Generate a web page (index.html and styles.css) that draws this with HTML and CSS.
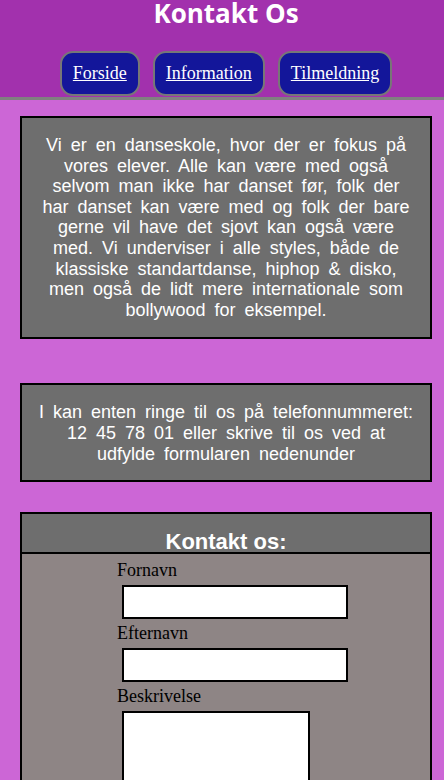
FILE: index.html
```html
<!DOCTYPE html>
<html lang="da">
<head>
<meta charset="utf-8">
<title>Kontakt Os</title>
<link rel="stylesheet" href="styles.css">
</head>
<body>
<header class="site-header">
  <h1 class="site-title">Kontakt Os</h1>
  <nav class="nav">
    <a class="nav-btn" href="#">Forside</a>
    <a class="nav-btn" href="#">Information</a>
    <a class="nav-btn" href="#">Tilmeldning</a>
  </nav>
</header>
<main class="main">
  <section class="box box-intro">
    <p>Vi er en danseskole, hvor der er fokus på vores elever. Alle kan være med også selvom man ikke har danset før, folk der har danset kan være med og folk der bare gerne vil have det sjovt kan også være med. Vi underviser i alle styles, både de klassiske standartdanse, hiphop &amp; disko, men også de lidt mere internationale som bollywood for eksempel.</p>
  </section>
  <section class="box box-phone">
    <p>I kan enten ringe til os på telefonnummeret: 12 45 78 01 eller skrive til os ved at udfylde formularen nedenunder</p>
  </section>
  <section class="form-box">
    <div class="form-head"><h2>Kontakt os:</h2></div>
    <form class="form">
      <label class="lbl" for="fn">Fornavn</label>
      <input class="inp" id="fn" type="text">
      <label class="lbl" for="en">Efternavn</label>
      <input class="inp" id="en" type="text">
      <label class="lbl" for="bs">Beskrivelse</label>
      <textarea class="txt" id="bs"></textarea>
    </form>
  </section>
</main>
</body>
</html>
```
FILE: styles.css
```css
html, body { margin: 0; padding: 0; }
body {
  background: #cc66d6;
  font-family: "Liberation Serif", serif;
}
.site-header {
  background: #a231ad;
  border-bottom: 3px solid #808080;
  padding: 0 0 1px 8px;
  text-align: center;
}
.site-title {
  margin: 0;
  padding-top: 1px;
  font-family: "Open Sans", sans-serif;
  font-weight: 700;
  font-size: 26px;
  line-height: 24px;
  color: #fff;
}
.nav {
  display: flex;
  justify-content: center;
  gap: 13px;
  margin-top: 26px;
}
.nav-btn {
  display: flex;
  align-items: center;
  height: 41px;
  padding: 0 11px;
  background: #13169a;
  border: 2px solid #777777;
  border-radius: 13px;
  color: #fff;
  font-family: "Liberation Serif", serif;
  font-size: 18px;
}
.main {
  padding: 16px 12px 0 20px;
}
.box {
  background: #6e6e6e;
  border: 2px solid #000;
  color: #fff;
  font-family: "Liberation Sans", Arial, sans-serif;
  font-size: 18px;
  line-height: 20.6px;
  text-align: center;
  word-spacing: 4px;
  padding: 0 16px;
}
.box p { margin: 0; }
.box-intro { padding-top: 17px; padding-bottom: 17px; }
.box-phone { margin-top: 44px; padding-top: 17px; padding-bottom: 16px; }
.form-box {
  margin-top: 30px;
  border: 2px solid #000;
  background: #8e8585;
}
.form-head {
  background: #6e6e6e;
  border-bottom: 2px solid #000;
  height: 38px;
  display: flex;
  align-items: flex-end;
  justify-content: center;
}
.form-head h2 {
  margin: 0;
  font-family: "Liberation Sans", Arial, sans-serif;
  font-weight: 700;
  font-size: 22px;
  line-height: 21px;
  color: #fff;
}
.form {
  display: flex;
  flex-direction: column;
  align-items: flex-start;
  padding: 6px 0 0 95px;
}
.lbl {
  font-size: 18px;
  line-height: 21px;
  color: #000;
}
.inp {
  margin: 4px 0 4px 5px;
  width: 226px;
  height: 34px;
  box-sizing: border-box;
  border: 2px solid #000;
  background: #fff;
  padding: 0;
}
.txt {
  margin: 4px 0 0 5px;
  width: 188px;
  height: 120px;
  box-sizing: border-box;
  border: 2px solid #000;
  background: #fff;
  resize: none;
}
```
